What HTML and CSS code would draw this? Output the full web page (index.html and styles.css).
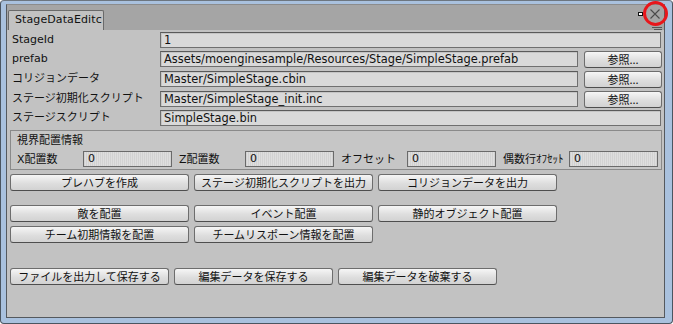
FILE: index.html
```html
<!DOCTYPE html>
<html lang="ja">
<head>
    <meta charset="UTF-8">
    <title>StageDataEditor</title>
    <link rel="stylesheet" href="styles.css">
</head>
<body>
    <div class="window">
        <div class="panel">
            <div class="tab-strip">
                <div class="tab">StageDataEditc</div>
                <svg class="win-controls" width="30" height="25" viewBox="0 0 30 25">
                    <rect x="4.5" y="7.5" width="4" height="3" fill="#fff" stroke="#111"/>
                    <path d="M16.5 4.5 L25.5 13.5 M25.5 4.5 L16.5 13.5" stroke="#4a4a4a" stroke-width="1.1"/>
                    <path d="M18 22.5 H28 M20 24.5 H28" stroke="#555" stroke-width="1"/>
                </svg>
            </div>

            <div class="content">
                <div class="prop-row first">
                    <span class="label">StageId</span>
                    <div class="field wide">1</div>
                </div>
                <div class="prop-row">
                    <span class="label">prefab</span>
                    <div class="field">Assets/moenginesample/Resources/Stage/SimpleStage.prefab</div>
                    <button class="btn browse">参照...</button>
                </div>
                <div class="prop-row">
                    <span class="label">コリジョンデータ</span>
                    <div class="field">Master/SimpleStage.cbin</div>
                    <button class="btn browse">参照...</button>
                </div>
                <div class="prop-row">
                    <span class="label">ステージ初期化スクリプト</span>
                    <div class="field">Master/SimpleStage_init.inc</div>
                    <button class="btn browse">参照...</button>
                </div>
                <div class="prop-row">
                    <span class="label">ステージスクリプト</span>
                    <div class="field wide">SimpleStage.bin</div>
                </div>

                <div class="view-box">
                    <div class="view-title">視界配置情報</div>
                    <div class="view-fields">
                        <div class="num-group"><span class="num-label">X配置数</span><div class="num-field">0</div></div>
                        <div class="num-group"><span class="num-label">Z配置数</span><div class="num-field">0</div></div>
                        <div class="num-group"><span class="num-label">オフセット</span><div class="num-field">0</div></div>
                        <div class="num-group"><span class="num-label">偶数行ｵﾌｾｯﾄ</span><div class="num-field">0</div></div>
                    </div>
                </div>

                <div class="btn-grid">
                    <button class="btn">プレハブを作成</button>
                    <button class="btn">ステージ初期化スクリプトを出力</button>
                    <button class="btn">コリジョンデータを出力</button>
                </div>

                <div class="btn-grid spaced">
                    <button class="btn">敵を配置</button>
                    <button class="btn">イベント配置</button>
                    <button class="btn">静的オブジェクト配置</button>
                    <button class="btn">チーム初期情報を配置</button>
                    <button class="btn">チームリスポーン情報を配置</button>
                </div>

                <div class="btn-grid save">
                    <button class="btn">ファイルを出力して保存する</button>
                    <button class="btn">編集データを保存する</button>
                    <button class="btn">編集データを破棄する</button>
                </div>
            </div>
        </div>

        <svg class="highlight" width="28" height="28" viewBox="0 0 28 28">
            <circle cx="13.5" cy="13.5" r="11" fill="none" stroke="#e8161b" stroke-width="3"/>
        </svg>
    </div>
</body>
</html>
```

FILE: styles.css
```css
:root {
    --frame-blue: #a9c1de;
    --frame-dark: #4b5560;
    --strip-gray: #a5a5a5;
    --panel-gray: #c2c2c2;
    --field-bg: #d9d9d9;
    --field-border: #6f6f6f;
    --text: #111;
}

* {
    margin: 0;
    padding: 0;
    box-sizing: border-box;
}

body {
    width: 673px;
    height: 324px;
    background: #fff;
    font-family: 'DejaVu Sans', 'Noto Sans CJK JP', sans-serif;
    font-size: 11px;
    color: var(--text);
}

.window {
    position: relative;
    width: 673px;
    height: 324px;
    background: var(--frame-blue);
    border: 1px solid var(--frame-dark);
    border-top-color: #6d7680;
    border-radius: 4px;
    padding: 3px 7px 5px 5px;
    display: flex;
}

.panel {
    flex: 1;
    display: flex;
    flex-direction: column;
    border: 1px solid #55595e;
    border-top-color: #8c8c8c;
    background: var(--strip-gray);
}

.tab-strip {
    height: 25px;
    display: flex;
    align-items: flex-end;
    background: var(--strip-gray);
}

.tab {
    width: 96px;
    height: 20px;
    margin-left: 1px;
    padding: 0 0 0 6px;
    background: var(--panel-gray);
    border: 1px solid #6a6a6a;
    border-bottom: none;
    border-radius: 2px 2px 0 0;
    white-space: nowrap;
    line-height: 18px;
    font-size: 11px;
    letter-spacing: 0.1px;
}

.win-controls {
    margin-left: auto;
    align-self: stretch;
}

.content {
    flex: 1;
    background: var(--panel-gray);
    padding: 1px 2px 0 3px;
}

.prop-row {
    display: grid;
    grid-template-columns: 142px 1fr 78px;
    column-gap: 6px;
    align-items: center;
    height: 17px;
    margin-top: 3px;
    padding-left: 2px;
}

.prop-row.first {
    margin-top: 0;
    margin-bottom: -2px;
}

.label {
    white-space: nowrap;
    line-height: 17px;
}

.field {
    height: 16px;
    line-height: 14px;
    padding-left: 3px;
    font-size: 11.4px;
    background: var(--field-bg);
    border: 1px solid var(--field-border);
    border-top-color: #5a5a5a;
    box-shadow: inset 1px 1px 0 #c4c4c4;
    white-space: nowrap;
    overflow: hidden;
}

.field.wide {
    grid-column: 2 / 4;
    margin-right: 1px;
}

.btn {
    font-family: 'Noto Sans CJK JP', 'DejaVu Sans', sans-serif;
    font-size: 11px;
    color: var(--text);
    height: 17px;
    line-height: 15px;
    background: linear-gradient(#f6f6f6, #dedede 55%, #d2d2d2);
    border: 1px solid #6d6d6d;
    border-bottom-color: #4e4e4e;
    border-radius: 3px;
    white-space: nowrap;
    overflow: hidden;
}

.browse {
    height: 17px;
    margin-top: 2px;
}

.view-box {
    margin: 4px 0 0 0;
    height: 40px;
    border: 1px solid #8a8a8a;
    background: #c6c6c6;
    padding: 2px 3px 0 6px;
}

.view-title {
    height: 16px;
    line-height: 16px;
}

.view-fields {
    display: flex;
    gap: 7px;
    margin-top: 2px;
}

.num-group {
    flex: 1;
    display: flex;
    align-items: center;
}

.num-label {
    width: 66px;
    white-space: nowrap;
    line-height: 15px;
}

.num-field {
    flex: 1;
    height: 16px;
    line-height: 14px;
    padding-left: 4px;
    border: 1px solid #6a6a6a;
    background: repeating-linear-gradient(90deg, #d2d2d2 0 1px, #dedede 1px 2px);
}

.btn-grid {
    display: grid;
    grid-template-columns: repeat(3, 179px);
    column-gap: 5px;
    row-gap: 4px;
    margin-top: 4px;
}

.btn-grid.spaced {
    margin-top: 14px;
}

.btn-grid.save {
    grid-template-columns: repeat(3, 159px);
    margin-top: 25px;
}

.highlight {
    position: absolute;
    left: 641px;
    top: -1px;
}
```
